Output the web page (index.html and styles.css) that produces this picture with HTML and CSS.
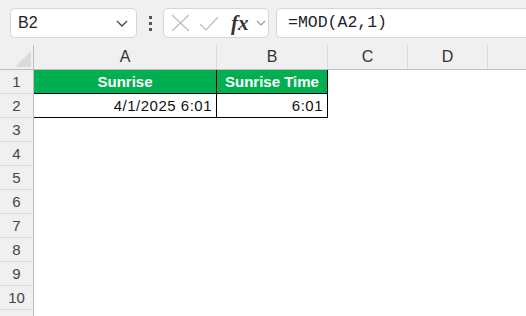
FILE: index.html
```html
<!DOCTYPE html>
<html lang="en">
<head>
    <meta charset="UTF-8">
    <title>Sunrise</title>
    <link rel="stylesheet" href="styles.css">
</head>
<body>
    <div class="toolbar">
        <div class="namebox">
            <span>B2</span>
            <svg class="chev" width="12" height="7" viewBox="0 0 12 7"><path d="M1 1 L6 6 L11 1" fill="none" stroke="#444" stroke-width="1.3"/></svg>
        </div>
        <div class="dots"><i></i><i></i><i></i></div>
        <div class="fxbox">
            <svg width="19" height="18" viewBox="0 0 19 18"><path d="M1 1 L18 17 M18 1 L1 17" stroke="#bdbdbd" stroke-width="1.2" fill="none"/></svg>
            <svg width="20" height="15" viewBox="0 0 20 15"><path d="M1 8 L7 14 L19 1" stroke="#bdbdbd" stroke-width="1.2" fill="none"/></svg>
            <span class="fx">fx</span>
            <svg width="10" height="6" viewBox="0 0 10 6"><path d="M1 1 L5 5 L9 1" fill="none" stroke="#9a9a9a" stroke-width="1.1"/></svg>
        </div>
        <div class="formula">=MOD(A2,1)</div>
    </div>

    <div class="sheet">
        <div class="corner"><span class="tri"></span></div>
        <div class="colhead">A</div>
        <div class="colhead">B</div>
        <div class="colhead">C</div>
        <div class="colhead">D</div>
        <div class="colhead last"></div>

        <div class="rowhead">1</div>
        <div class="cell head bd">Sunrise</div>
        <div class="cell head bd">Sunrise Time</div>
        <div class="cell"></div><div class="cell"></div><div class="cell"></div>

        <div class="rowhead">2</div>
        <div class="cell num bd">4/1/2025 6:01</div>
        <div class="cell num bd">6:01</div>
        <div class="cell"></div><div class="cell"></div><div class="cell"></div>

        <div class="rowhead">3</div><div class="cell"></div><div class="cell"></div><div class="cell"></div><div class="cell"></div><div class="cell"></div>
        <div class="rowhead">4</div><div class="cell"></div><div class="cell"></div><div class="cell"></div><div class="cell"></div><div class="cell"></div>
        <div class="rowhead">5</div><div class="cell"></div><div class="cell"></div><div class="cell"></div><div class="cell"></div><div class="cell"></div>
        <div class="rowhead">6</div><div class="cell"></div><div class="cell"></div><div class="cell"></div><div class="cell"></div><div class="cell"></div>
        <div class="rowhead">7</div><div class="cell"></div><div class="cell"></div><div class="cell"></div><div class="cell"></div><div class="cell"></div>
        <div class="rowhead">8</div><div class="cell"></div><div class="cell"></div><div class="cell"></div><div class="cell"></div><div class="cell"></div>
        <div class="rowhead">9</div><div class="cell"></div><div class="cell"></div><div class="cell"></div><div class="cell"></div><div class="cell"></div>
        <div class="rowhead">10</div><div class="cell"></div><div class="cell"></div><div class="cell"></div><div class="cell"></div><div class="cell"></div>
        <div class="rowhead"></div><div class="cell"></div><div class="cell"></div><div class="cell"></div><div class="cell"></div><div class="cell"></div>
    </div>
</body>
</html>
```

FILE: styles.css
```css
* {
    margin: 0;
    padding: 0;
    box-sizing: border-box;
}

body {
    width: 526px;
    height: 316px;
    overflow: hidden;
    background: #fff;
    font-family: "Liberation Sans", Arial, sans-serif;
}

.toolbar {
    height: 45px;
    background: #f0f0f0;
    display: flex;
    align-items: flex-start;
    padding: 8px 0 0 10px;
}

.namebox {
    width: 127px;
    height: 30px;
    background: #fff;
    border: 1px solid #d6d6d6;
    border-radius: 5px;
    display: flex;
    align-items: center;
    justify-content: space-between;
    padding: 0 8px 0 7px;
    font-size: 16px;
    color: #222;
}

.dots {
    width: 26px;
    height: 30px;
    display: flex;
    flex-direction: column;
    align-items: center;
    justify-content: center;
    gap: 3px;
}

.dots i {
    display: block;
    width: 3px;
    height: 3px;
    background: #555;
}

.fxbox {
    width: 106px;
    height: 30px;
    background: #fff;
    border: 1px solid #d6d6d6;
    border-radius: 5px;
    display: flex;
    align-items: center;
    padding-left: 7px;
    gap: 9px;
}

.fx {
    font-family: "Liberation Serif", "DejaVu Serif", serif;
    font-style: italic;
    font-weight: bold;
    font-size: 21px;
    color: #333;
    margin-left: 3px;
    margin-right: -2px;
}

.formula {
    flex: 1;
    height: 30px;
    margin-left: 7px;
    background: #fff;
    border: 1px solid #d6d6d6;
    border-right: none;
    border-radius: 5px 0 0 5px;
    padding-left: 11px;
    font-family: "Liberation Mono", "DejaVu Sans Mono", monospace;
    font-size: 16.5px;
    line-height: 28px;
    color: #1d2230;
}

.sheet {
    display: grid;
    grid-template-columns: 34px 183px 111px 80px 80px 1fr;
    grid-template-rows: 25px;
    grid-auto-rows: 24px;
    background: #f0f0f0;
}

.corner {
    border-right: 1px solid #bdbdbd;
    border-bottom: 1px solid #bdbdbd;
    position: relative;
}

.tri {
    position: absolute;
    left: 15px;
    top: 6px;
    width: 16px;
    height: 16px;
    background: #dadada;
    clip-path: polygon(100% 0, 100% 100%, 0 100%);
}

.colhead {
    border-right: 1px solid #dadada;
    border-bottom: 1px solid #bdbdbd;
    display: flex;
    align-items: center;
    justify-content: center;
    font-size: 16px;
    color: #333;
}

.colhead.last {
    border-right: none;
}

.rowhead {
    border-right: 1px solid #bdbdbd;
    border-bottom: 1px solid #d9d9d9;
    display: flex;
    align-items: center;
    justify-content: center;
    font-size: 15px;
    color: #444;
}

.cell {
    background: #fff;
    font-size: 15px;
    display: flex;
    align-items: center;
    color: #111;
}

.cell.bd {
    border-right: 1px solid #000;
    border-bottom: 1px solid #000;
}

.cell.head {
    background: #00b050;
    color: #fff;
    font-weight: bold;
    justify-content: center;
}

.cell.num {
    justify-content: flex-end;
    padding-right: 4px;
    letter-spacing: 0.5px;
}
```
